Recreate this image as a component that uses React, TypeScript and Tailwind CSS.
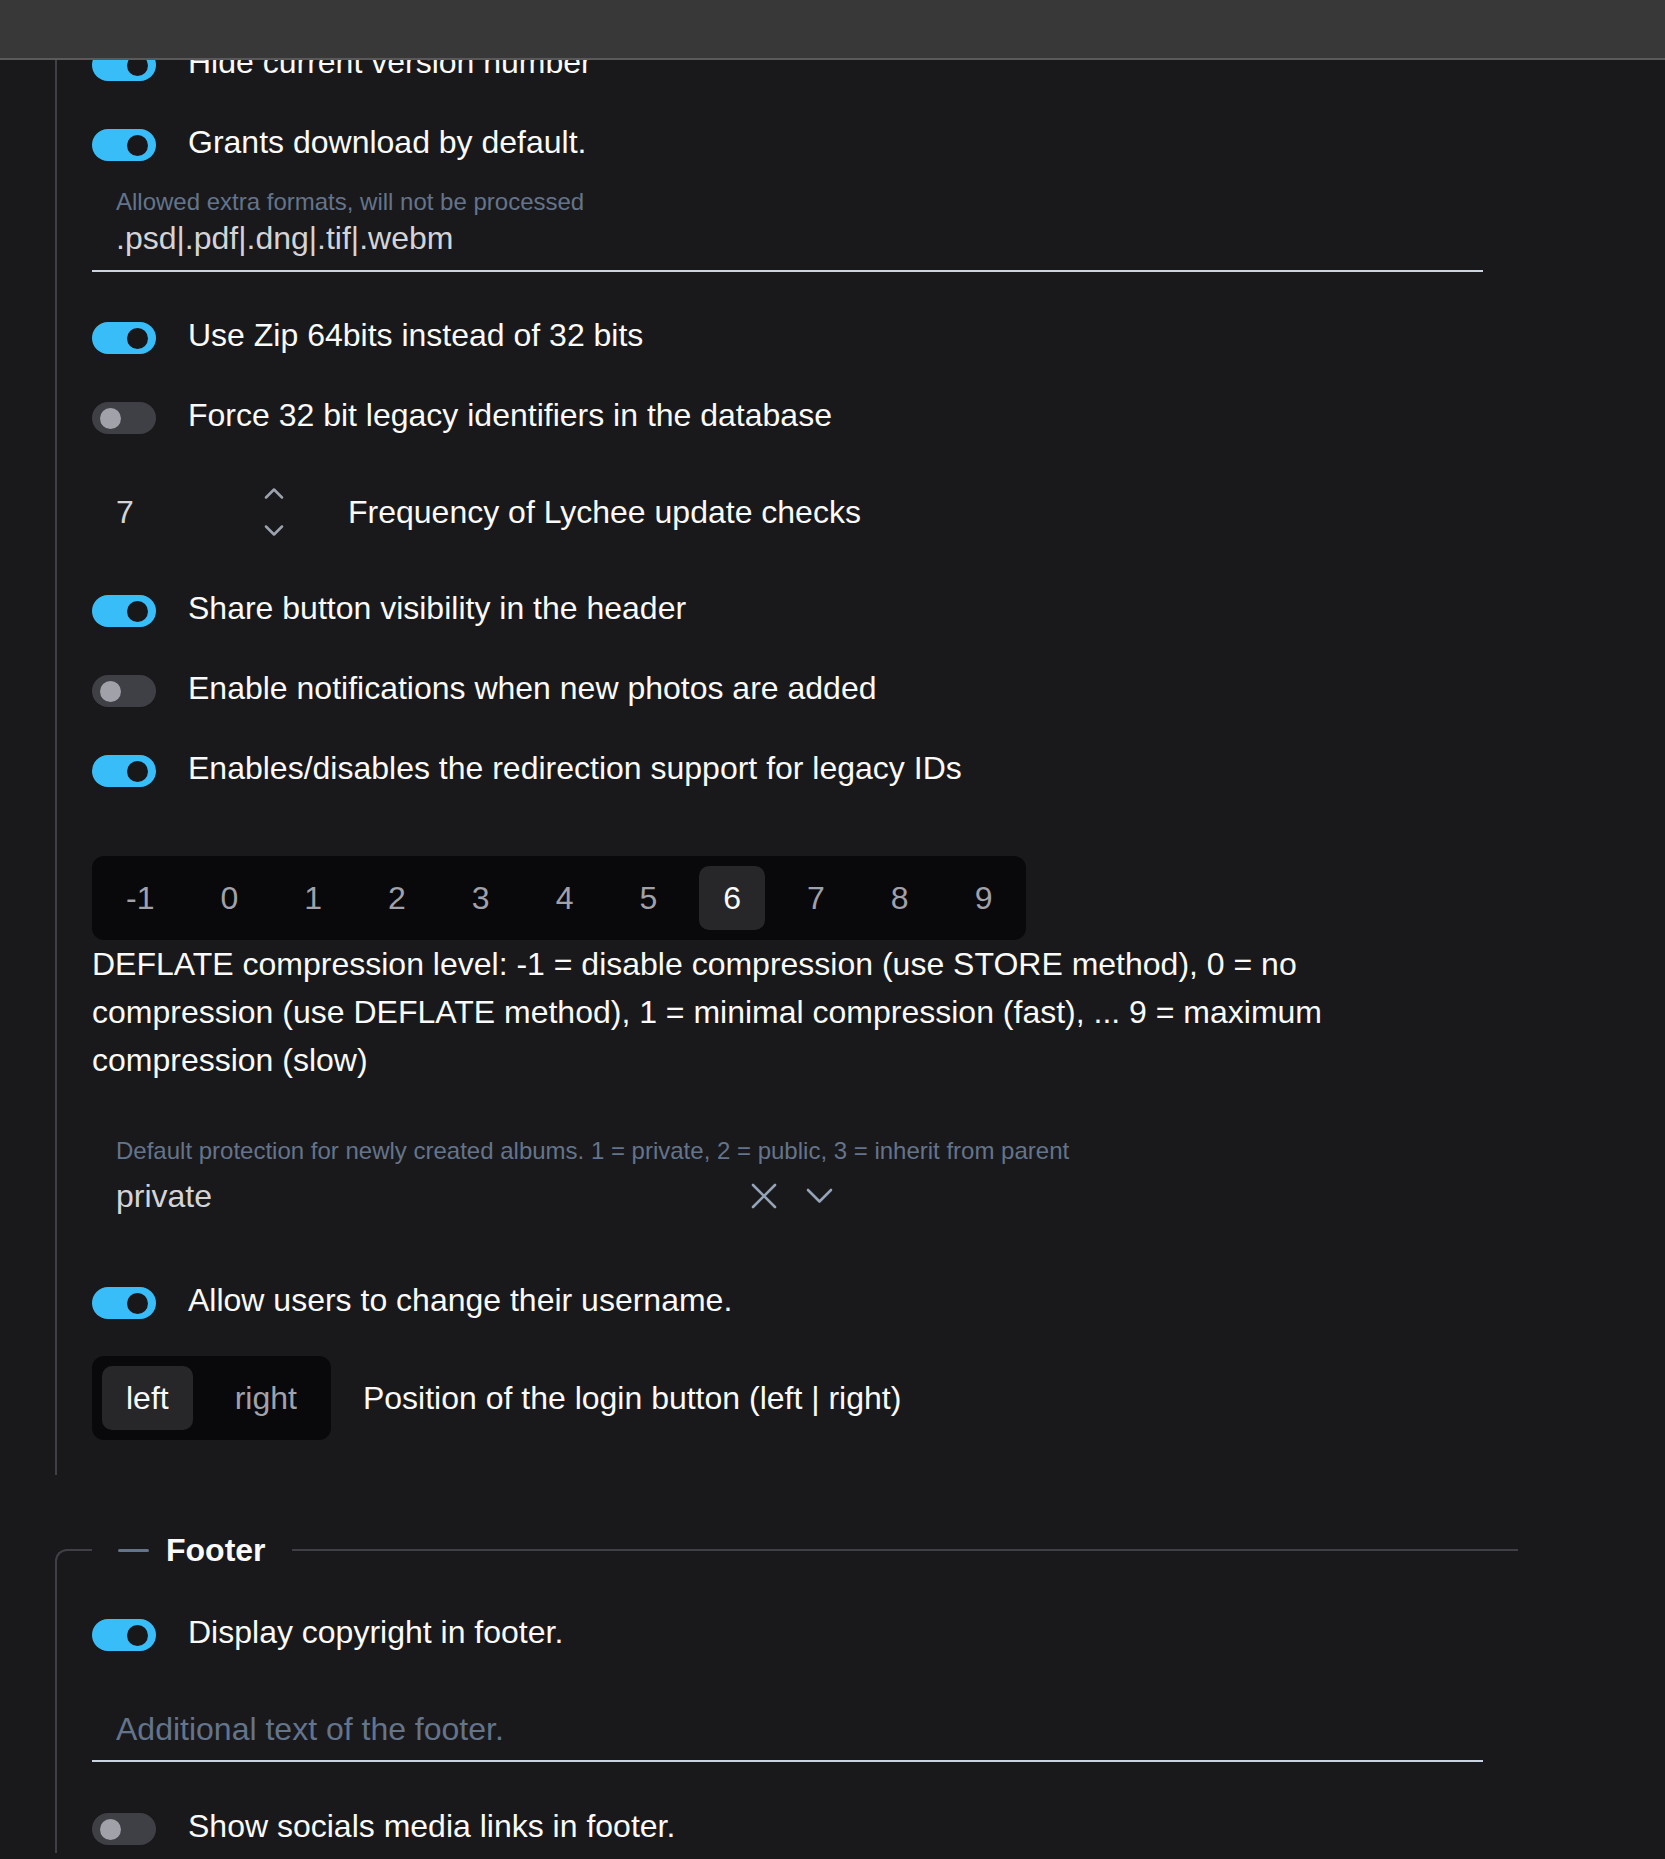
import React from 'react';

function Toggle({ on }: { on: boolean }) {
  return (
    <span
      className={`flex h-8 w-16 shrink-0 items-center rounded-full px-[8px] ${
        on ? 'justify-end bg-[#38bdf8]' : 'justify-start bg-[#3f3f46]'
      }`}
    >
      <span className={`h-[21px] w-[21px] rounded-full ${on ? 'bg-[#18181b]' : 'bg-[#a1a1aa]'}`} />
    </span>
  );
}

function ToggleRow({ on, label, className = '' }: { on: boolean; label: string; className?: string }) {
  return (
    <div className={`flex h-12 items-center gap-[32px] ${className}`}>
      <Toggle on={on} />
      <span className="pb-[7px] text-[32px] leading-[48px] text-[#fafafa]">{label}</span>
    </div>
  );
}

function SegmentGroup({ options, value }: { options: string[]; value: string }) {
  return (
    <div className="flex w-fit shrink-0 rounded-[12px] bg-[#09090b] px-[1px]">
      {options.map((o) => (
        <div key={o} className="px-[9px] py-[10px]">
          <div
            className={`flex h-16 items-center rounded-[10px] px-6 text-[32px] ${
              o === value ? 'bg-[#27272a] text-[#fafafa]' : 'text-[#a1a1aa]'
            }`}
          >
            {o}
          </div>
        </div>
      ))}
    </div>
  );
}

export default function App() {
  return (
    <div className="relative h-[1859px] overflow-hidden bg-[#19191b] font-['Liberation_Sans',Arial,sans-serif] text-[#fafafa]">
      {/* sticky app header over the scrolled settings */}
      <header className="absolute inset-x-0 top-0 z-10 h-[60px] border-b-2 border-[#5a5a5a] bg-[#383838]" />

      <div className="w-[1518px] pl-[55px]">
        <section className="border-l-2 border-[#3f3f46] px-[35px] pb-[35px] pt-[41px]">
          <ToggleRow on label="Hide current version number" />
          <ToggleRow on label="Grants download by default." className="mt-8" />

          <div className="mt-[17px] border-b-2 border-[#cbd5e1] pb-[12px]">
            <div className="pl-6 text-[24px] leading-[32px] text-[#64748b]">Allowed extra formats, will not be processed</div>
            <div className="pl-6 text-[32px] leading-[40px] text-[#d4d4d8]">.psd|.pdf|.dng|.tif|.webm</div>
          </div>

          <ToggleRow on label="Use Zip 64bits instead of 32 bits" className="mt-[42px]" />
          <ToggleRow on={false} label="Force 32 bit legacy identifiers in the database" className="mt-8" />

          <div className="mt-[38px] flex h-16 items-center">
            <div className="w-[158px] pl-6 text-[32px] leading-[40px] text-[#d4d4d8]">7</div>
            <div className="flex h-16 w-12 flex-col items-center justify-center gap-[26px]">
              <svg width="20" height="12" viewBox="0 0 20 12" fill="none" stroke="#9ca3af" strokeWidth="2.5" strokeLinecap="round" strokeLinejoin="round">
                <polyline points="2,10.5 10,2.5 18,10.5" />
              </svg>
              <svg width="20" height="12" viewBox="0 0 20 12" fill="none" stroke="#9ca3af" strokeWidth="2.5" strokeLinecap="round" strokeLinejoin="round">
                <polyline points="2,1.5 10,9.5 18,1.5" />
              </svg>
            </div>
            <span className="ml-[50px] text-[32px] leading-[48px]">Frequency of Lychee update checks</span>
          </div>

          <ToggleRow on label="Share button visibility in the header" className="mt-[43px]" />
          <ToggleRow on={false} label="Enable notifications when new photos are added" className="mt-8" />
          <ToggleRow on label="Enables/disables the redirection support for legacy IDs" className="mt-8" />

          <div className="mt-[61px]">
            <SegmentGroup options={['-1', '0', '1', '2', '3', '4', '5', '6', '7', '8', '9']} value="6" />
          </div>
          <p className="w-[1300px] text-[32px] leading-[48px]">
            DEFLATE compression level: -1 = disable compression (use STORE method), 0 = no compression (use DEFLATE
            method), 1 = minimal compression (fast), ... 9 = maximum compression (slow)
          </p>

          <div className="mt-[51px] w-[760px] pr-[19px]">
            <div className="pl-6 text-[24px] leading-[32px] text-[#64748b] whitespace-nowrap">
              Default protection for newly created albums. 1 = private, 2 = public, 3 = inherit from parent
            </div>
            <div className="mt-[9px] flex h-10 items-center">
              <span className="flex-1 pl-6 text-[32px] leading-[40px] text-[#d4d4d8]">private</span>
              <svg width="26" height="26" viewBox="0 0 26 26" fill="none" stroke="#94a3b8" strokeWidth="2.6" strokeLinecap="round">
                <path d="M2 2 24 24M24 2 2 24" />
              </svg>
              <svg className="ml-[29px]" width="27" height="16" viewBox="0 0 27 16" fill="none" stroke="#94a3b8" strokeWidth="2.6" strokeLinecap="round" strokeLinejoin="round">
                <polyline points="2,2 13.5,13.5 25,2" />
              </svg>
            </div>
          </div>

          <ToggleRow on label="Allow users to change their username." className="mt-[63px]" />

          <div className="mt-[29px] flex items-center gap-[32px]">
            <SegmentGroup options={['left', 'right']} value="left" />
            <span className="text-[32px] leading-[48px]">Position of the login button (left | right)</span>
          </div>
        </section>

        <fieldset className="mt-[51px] rounded-tl-[12px] border-l-2 border-t-2 border-[#3f3f46] px-[35px]">
          <legend className="px-[26px]">
            <div className="flex h-12 items-center gap-[17px]">
              <span className="h-[3px] w-[31px] rounded-full bg-[#64748b]" />
              <span className="text-[32px] font-bold leading-[48px]">Footer</span>
            </div>
          </legend>

          <ToggleRow on label="Display copyright in footer." className="mt-[37px]" />

          <div className="mt-[50px] border-b-2 border-[#cbd5e1] pb-[11px]">
            <div className="pl-6 text-[32px] leading-[40px] text-[#64748b]">Additional text of the footer.</div>
          </div>

          <ToggleRow on={false} label="Show socials media links in footer." className="mt-[43px]" />
        </fieldset>
      </div>
    </div>
  );
}
